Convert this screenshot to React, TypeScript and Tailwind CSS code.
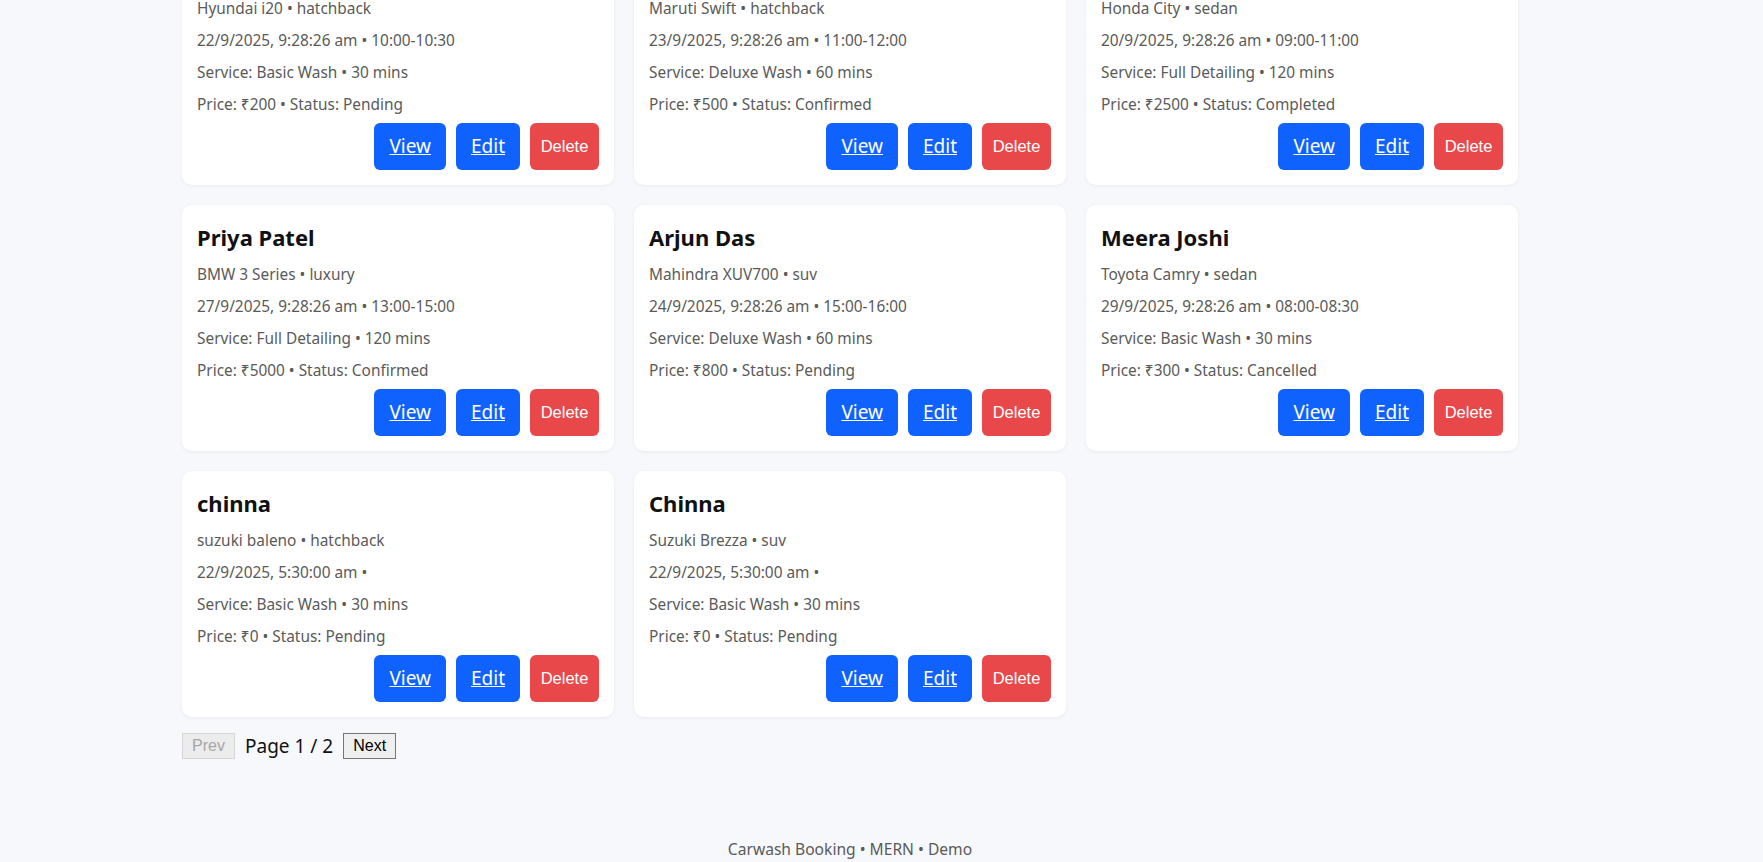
import React from 'react';

type Booking = {
  name: string;
  car: string;
  when: string;
  service: string;
  price: string;
};

const bookings: Booking[] = [
  { name: 'Rahul Sharma', car: 'Hyundai i20 • hatchback', when: '22/9/2025, 9:28:26 am • 10:00-10:30', service: 'Service: Basic Wash • 30 mins', price: 'Price: ₹200 • Status: Pending' },
  { name: 'Amit Kumar', car: 'Maruti Swift • hatchback', when: '23/9/2025, 9:28:26 am • 11:00-12:00', service: 'Service: Deluxe Wash • 60 mins', price: 'Price: ₹500 • Status: Confirmed' },
  { name: 'Sneha Reddy', car: 'Honda City • sedan', when: '20/9/2025, 9:28:26 am • 09:00-11:00', service: 'Service: Full Detailing • 120 mins', price: 'Price: ₹2500 • Status: Completed' },
  { name: 'Priya Patel', car: 'BMW 3 Series • luxury', when: '27/9/2025, 9:28:26 am • 13:00-15:00', service: 'Service: Full Detailing • 120 mins', price: 'Price: ₹5000 • Status: Confirmed' },
  { name: 'Arjun Das', car: 'Mahindra XUV700 • suv', when: '24/9/2025, 9:28:26 am • 15:00-16:00', service: 'Service: Deluxe Wash • 60 mins', price: 'Price: ₹800 • Status: Pending' },
  { name: 'Meera Joshi', car: 'Toyota Camry • sedan', when: '29/9/2025, 9:28:26 am • 08:00-08:30', service: 'Service: Basic Wash • 30 mins', price: 'Price: ₹300 • Status: Cancelled' },
  { name: 'chinna', car: 'suzuki baleno • hatchback', when: '22/9/2025, 5:30:00 am • ', service: 'Service: Basic Wash • 30 mins', price: 'Price: ₹0 • Status: Pending' },
  { name: 'Chinna', car: 'Suzuki Brezza • suv', when: '22/9/2025, 5:30:00 am • ', service: 'Service: Basic Wash • 30 mins', price: 'Price: ₹0 • Status: Pending' },
];

const BookingCard = ({ b }: { b: Booking }) => (
  <div className="bg-white rounded-[10px] shadow-[0_1px_4px_rgba(0,0,0,0.06)] px-[15px] pt-4 pb-[15px]">
    <h3 className="text-[22px] leading-[32px] font-bold text-[#111]">{b.name}</h3>
    <div className="mt-[6px] text-[15.4px] leading-[32px] text-[#5a5a5a]">
      <p>{b.car}</p>
      <p className="whitespace-pre">{b.when}</p>
      <p>{b.service}</p>
      <p>{b.price}</p>
    </div>
    <div className="mt-[2px] flex justify-end gap-[10px]">
      <a href="#" className="h-[47px] px-[15px] flex items-center rounded-[6px] bg-[#1062fe] text-white text-[19px] underline">
        View
      </a>
      <a href="#" className="h-[47px] px-[15px] flex items-center rounded-[6px] bg-[#1062fe] text-white text-[19px] underline">
        Edit
      </a>
      <button className="h-[47px] w-[69px] rounded-[6px] bg-[#e8484a] text-white text-[16.5px] font-['Liberation_Sans',Arial,sans-serif]">
        Delete
      </button>
    </div>
  </div>
);

export default function App() {
  return (
    <div className="h-[862px] overflow-hidden bg-[#f7f8fb] font-['Noto_Sans',sans-serif]">
      <div className="ml-[182px] w-[1336px] -mt-[61px]">
        <div className="grid grid-cols-[repeat(3,432px)] gap-5">
          {bookings.map((b, i) => (
            <BookingCard key={i} b={b} />
          ))}
        </div>

        {/* pagination */}
        <div className="mt-4 flex items-center gap-[10px]">
          <button
            disabled
            className="h-[26px] w-[53px] border border-[#d6d6d6] bg-[#ececec] text-[#a6a6a6] text-[16px] font-['Liberation_Sans',Arial,sans-serif]"
          >
            Prev
          </button>
          <span className="text-[19px] leading-[26px] text-[#111]">Page 1 / 2</span>
          <button className="h-[26px] w-[53px] border border-[#767676] bg-[#efefef] text-black text-[16px] font-['Liberation_Sans',Arial,sans-serif]">
            Next
          </button>
        </div>

        <footer className="mt-[78px] text-center text-[15.6px] leading-6 text-[#5a5a5a]">
          Carwash Booking • MERN • Demo
        </footer>
      </div>
    </div>
  );
}
